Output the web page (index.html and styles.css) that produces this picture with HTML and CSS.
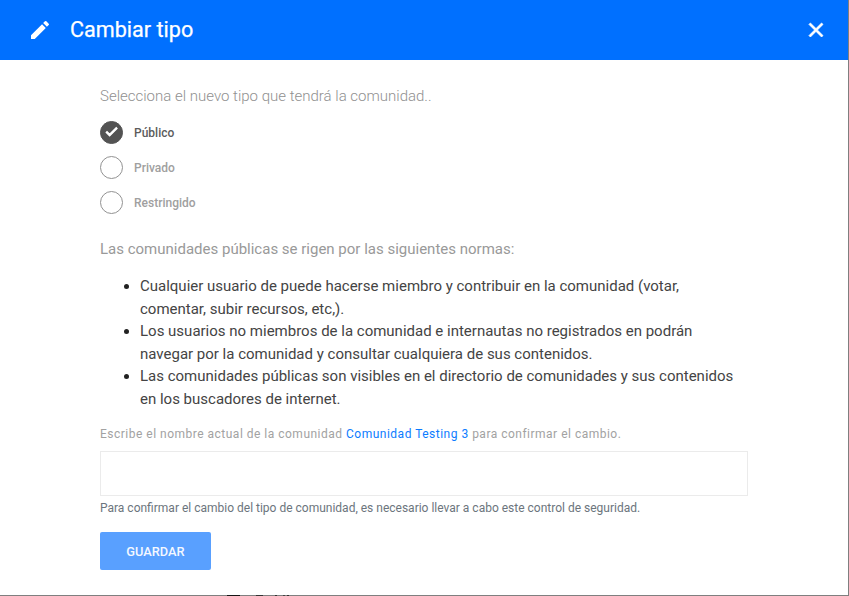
FILE: index.html
```html
<!DOCTYPE html>
<html lang="es">
<head>
<meta charset="utf-8">
<title>Cambiar tipo</title>
<link rel="stylesheet" href="styles.css">
</head>
<body>
<section class="modal">
  <header class="modal-header">
    <svg class="icon-edit" viewBox="0 0 24 24"><path d="M3 17.25V21h3.75L17.81 9.94l-3.75-3.75L3 17.25zM20.71 7.04a1 1 0 0 0 0-1.41l-2.34-2.34a1 1 0 0 0-1.41 0l-1.83 1.83 3.75 3.75 1.83-1.83z"/></svg>
    <h1>Cambiar tipo</h1>
    <svg class="icon-close" viewBox="0 0 24 24"><path d="M19 6.41 17.59 5 12 10.59 6.41 5 5 6.41 10.59 12 5 17.59 6.41 19 12 13.41 17.59 19 19 17.59 13.41 12z"/></svg>
  </header>
  <form class="modal-body">
    <p class="intro">Selecciona el nuevo tipo que tendrá la comunidad..</p>
    <div class="options">
      <div class="option selected"><span class="radio"><svg viewBox="0 0 24 24"><path d="M9 16.17 4.83 12l-1.42 1.41L9 19 21 7l-1.41-1.41z"/></svg></span>Público</div>
      <div class="option"><span class="radio"></span>Privado</div>
      <div class="option"><span class="radio"></span>Restringido</div>
    </div>
    <p class="rules-title">Las comunidades públicas se rigen por las siguientes normas:</p>
    <ul class="rules">
      <li>Cualquier usuario de puede hacerse miembro y contribuir en la comunidad (votar,<br>comentar, subir recursos, etc,).</li>
      <li>Los usuarios no miembros de la comunidad e internautas no registrados en podrán<br>navegar por la comunidad y consultar cualquiera de sus contenidos.</li>
      <li>Las comunidades públicas son visibles en el directorio de comunidades y sus contenidos<br>en los buscadores de internet.</li>
    </ul>
    <label class="confirm" for="name">Escribe el nombre actual de la comunidad <span>Comunidad Testing 3</span> para confirmar el cambio.</label>
    <input class="field" id="name" type="text">
    <p class="help">Para confirmar el cambio del tipo de comunidad, es necesario llevar a cabo este control de seguridad.</p>
    <button class="save" type="button">GUARDAR</button>
  </form>
  <div class="backdrop-edge"></div>
</section>
</body>
</html>
```
FILE: styles.css
```css
* { box-sizing: border-box; }
body { margin: 0; font-family: Roboto, sans-serif; background: #fff; }
h1, p, ul { margin: 0; }
.modal { width: 849px; height: 596px; overflow: hidden; display: flex; flex-direction: column; border-right: 1px solid #7f7f7f; }
.modal-header { height: 60px; flex: none; background: #0070ff; color: #fff; display: flex; align-items: center; padding: 0 20px 0 28px; }
.modal-header svg { width: 24px; height: 24px; fill: currentColor; }
.modal-header .icon-close { stroke: currentColor; stroke-width: .8; }
h1 { margin-left: 18px; flex: 1; font-size: 21.6px; font-weight: 400; line-height: 28px; -webkit-text-stroke: .25px #fff; }
.modal-body { flex: 1; padding: 25px 100px 0; display: flex; flex-direction: column; align-items: flex-start; }
.intro { font-size: 15px; line-height: 23px; font-weight: 300; color: #909090; }
.options { display: grid; gap: 11px; margin-top: 13px; }
.option { display: flex; align-items: center; height: 24px; gap: 11px; font-size: 12px; font-weight: 500; color: #a0a0a0; }
.radio { width: 23px; height: 23px; margin-bottom: 1px; border: 1px solid #929292; border-radius: 50%; display: flex; align-items: center; justify-content: center; }
.selected { color: #5c5c5c; }
.selected .radio { background: #535353; border-color: #535353; }
.radio svg { flex: none; width: 15px; margin-bottom: 2px; fill: #fff; stroke: #fff; stroke-width: 1.8; }
.rules-title { margin-top: 23px; font-size: 15px; line-height: 23px; color: #999; }
.rules { margin-top: 14px; padding-left: 40px; font-size: 15px; line-height: 22.6px; color: #444; white-space: nowrap; }
.rules li::marker { color: #222; }
.confirm { margin-top: 14px; font-size: 12px; line-height: 18px; letter-spacing: .494px; color: #a2a2a2; }
.confirm span { color: #0c7cff; }
.field { width: 648px; height: 45px; margin: 8px 0 0; border: 1px solid #ebebeb; outline: 0; }
.help { margin-top: 3px; font-size: 12px; line-height: 18px; color: #6c757d; }
.save { margin-top: 15px; width: 111px; height: 38px; padding: 2px 0 0; border: 0; border-radius: 2px; background: #59a0ff; color: #f4f8ff; font: 500 12.8px Roboto, sans-serif; }
.backdrop-edge {
  height: 1px;
  flex: none;
  background: linear-gradient(90deg, #7f7f7f 227px, #151515 227px 240px, #7f7f7f 240px 256px, #333 256px 263px, #7f7f7f 263px 275px, #333 275px 277px, #7f7f7f 277px 283px, #444 283px 285px, #7f7f7f 285px 287px, #333 287px 289px, #7f7f7f 289px);
}
```
